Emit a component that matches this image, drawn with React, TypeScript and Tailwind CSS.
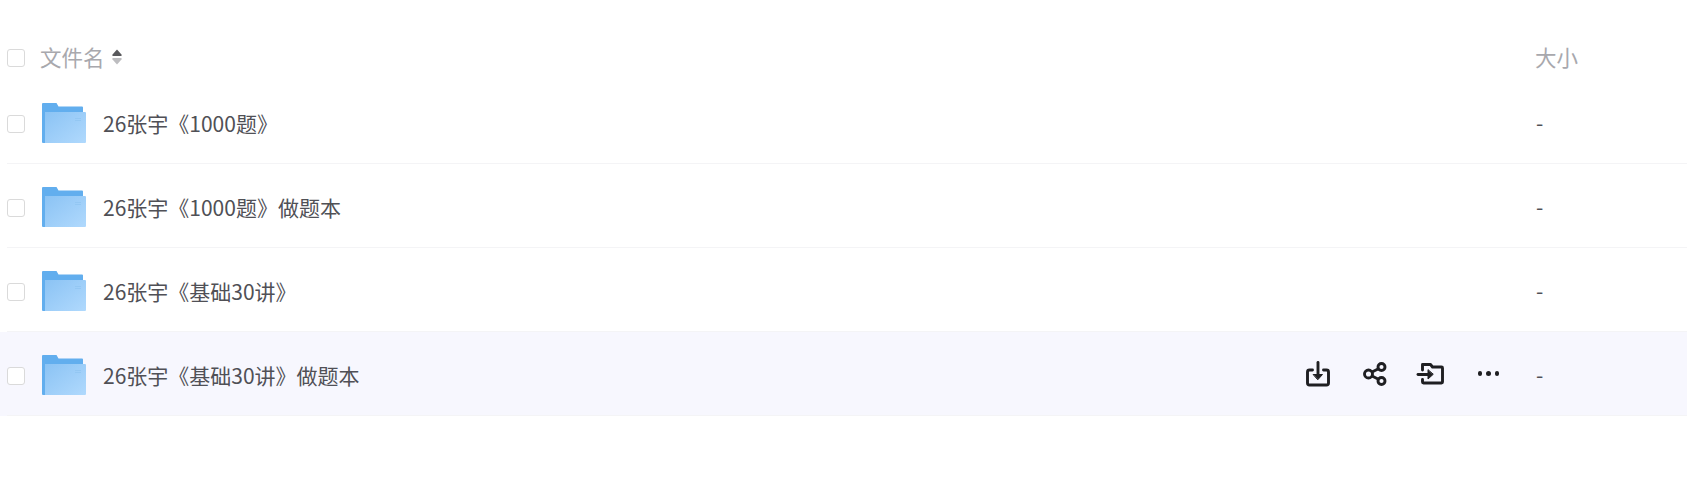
import React from 'react';

const rows = ['26张宇《1000题》', '26张宇《1000题》做题本', '26张宇《基础30讲》', '26张宇《基础30讲》做题本'];

const Checkbox: React.FC = () => (
  <span className="block w-[18px] h-[18px] rounded-[3px] border border-[#dadada] bg-white shrink-0" />
);

const FolderIcon: React.FC<{ id: string }> = ({ id }) => (
  <svg width="44" height="40" viewBox="0 0 44 40" className="block">
    <defs>
      <linearGradient id={id} x1="0" y1="0" x2="1" y2="1">
        <stop offset="0" stopColor="#8bc3f4" />
        <stop offset="1" stopColor="#b0d9fd" />
      </linearGradient>
    </defs>
    <path d="M0 1a1 1 0 0 1 1-1h13.500l2 3.500H40a1 1 0 0 1 1 1V39a1 1 0 0 1-1 1H1a1 1 0 0 1-1-1z" fill="#62aeee" />
    <path d="M3 9h40a1 1 0 0 1 1 1v29a1 1 0 0 1-1 1H3z" fill={`url(#${id})`} />
    <rect x="33" y="15" width="6" height="1" fill="#93c7f3" />
    <rect x="33" y="17" width="6" height="1" fill="#93c7f3" />
  </svg>
);

const SortIcon: React.FC = () => (
  <svg width="10" height="16" viewBox="0 0 10 16" className="block">
    <path d="M5 0.500L9.500 5.500a1 1 0 0 1-.8 1.500H1.300a1 1 0 0 1-.8-1.500z" fill="#59595c" />
    <path d="M5 15.500L9.500 10.500a1 1 0 0 0-.8-1.500H1.300a1 1 0 0 0-.8 1.500z" fill="#bdbdc0" />
  </svg>
);

const DownloadIcon: React.FC = () => (
  <svg width="26" height="26" viewBox="0 0 26 26" fill="none" stroke="#1f1f22" strokeWidth="2.900" strokeLinecap="round" strokeLinejoin="round">
    <path d="M7.500 9H4.500a2 2 0 0 0-2 2v11a2 2 0 0 0 2 2h17a2 2 0 0 0 2-2V11a2 2 0 0 0-2-2h-3" />
    <path d="M13 1.500V14" />
    <path d="M8.500 13.500h9L13 18.500z" fill="#1f1f22" strokeWidth="1" />
  </svg>
);

const ShareIcon: React.FC = () => (
  <svg width="26" height="26" viewBox="0 0 26 26" fill="none" stroke="#1f1f22" strokeWidth="2.900">
    <circle cx="6.500" cy="13" r="4" />
    <circle cx="19.500" cy="6" r="3.500" />
    <circle cx="19.500" cy="20" r="3.500" />
    <path d="M10 11l6.500-3.300M10 15l6.500 3.300" />
  </svg>
);

const MoveIcon: React.FC = () => (
  <svg width="28" height="24" viewBox="0 0 28 24" fill="none" stroke="#1f1f22" strokeWidth="2.900" strokeLinecap="round" strokeLinejoin="round">
    <path d="M6.500 8V2.500h8l2 2.500h9a1 1 0 0 1 1 1v14a1 1 0 0 1-1 1H7.500a1 1 0 0 1-1-1v-2.500" />
    <path d="M2 12.500h11" />
    <path d="M12 8v9l5-4.500z" fill="#1f1f22" strokeWidth="1" />
  </svg>
);

const App: React.FC = () => {
  return (
    <div className="w-[1687px] h-[477px] bg-white overflow-hidden font-['Noto_Sans_CJK_SC','Noto_Sans',sans-serif] text-[21px]">
      <div className="h-[36px]" />
      <div className="flex items-center h-[44px] pl-[7px] text-[#a8a8ad]">
        <Checkbox />
        <span className="ml-[15px] -mt-[2px] text-[21.500px]">文件名</span>
        <span className="ml-[7px] -mt-[2px]"><SortIcon /></span>
        <span className="ml-auto w-[152px] -mt-[1px] text-[21.500px]">大小</span>
      </div>
      {rows.map((name, i) => {
        const active = i === 3;
        return (
          <div key={name} className={`h-[84px] pl-[7px] ${active ? 'bg-[#f7f7fe]' : ''}`}>
            <div className="flex items-center h-[84px] pt-[4px] border-b border-[#f4f4f6] text-[#505056]">
              <Checkbox />
              <span className="ml-[17px] -mt-[2px]"><FolderIcon id={`folder-${i}`} /></span>
              <span className="ml-[17px]">{name}</span>
              {active && (
                <div className="ml-auto flex items-center -mt-[4px] mr-[19px]">
                  <span className="w-[57px] flex justify-center"><DownloadIcon /></span>
                  <span className="w-[57px] flex justify-center"><ShareIcon /></span>
                  <span className="w-[57px] flex justify-center -ml-[2px] mr-[2px]"><MoveIcon /></span>
                  <span className="w-[57px] flex justify-center gap-[4px]">
                    <i className="block w-[4.500px] h-[4.500px] rounded-full bg-[#1f1f22]" />
                    <i className="block w-[4.500px] h-[4.500px] rounded-full bg-[#1f1f22]" />
                    <i className="block w-[4.500px] h-[4.500px] rounded-full bg-[#1f1f22]" />
                  </span>
                </div>
              )}
              <span className={`${active ? '' : 'ml-auto'} w-[151px] -mt-[2px]`}>-</span>
            </div>
          </div>
        );
      })}
    </div>
  );
};

export default App;
